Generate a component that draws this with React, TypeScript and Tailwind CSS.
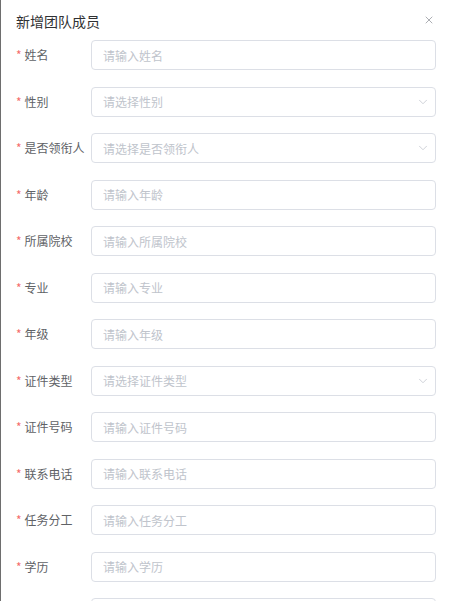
import { ChevronDown, X } from "lucide-react";

type Field = {
  label: string;
  placeholder: string;
  select?: boolean;
};

const fields: Field[] = [
  { label: "姓名", placeholder: "请输入姓名" },
  { label: "性别", placeholder: "请选择性别", select: true },
  { label: "是否领衔人", placeholder: "请选择是否领衔人", select: true },
  { label: "年龄", placeholder: "请输入年龄" },
  { label: "所属院校", placeholder: "请输入所属院校" },
  { label: "专业", placeholder: "请输入专业" },
  { label: "年级", placeholder: "请输入年级" },
  { label: "证件类型", placeholder: "请选择证件类型", select: true },
  { label: "证件号码", placeholder: "请输入证件号码" },
  { label: "联系电话", placeholder: "请输入联系电话" },
  { label: "任务分工", placeholder: "请输入任务分工" },
  { label: "学历", placeholder: "请输入学历" },
  // next row is only peeking in at the bottom edge
  { label: "", placeholder: "" },
];

const FormRow = ({ field }: { field: Field }) => (
  <div className="flex items-center h-[30px] shrink-0">
    <label className="w-[75px] shrink-0 flex items-center text-[12px] text-[#606266]">
      {field.label && <span className="text-[#f56c6c] mr-[3px]">*</span>}
      {field.label}
    </label>
    <div className="relative flex-1 h-[30px]">
      <input
        readOnly={field.select}
        placeholder={field.placeholder}
        className="w-full h-full border border-[#dcdfe6] rounded-[4px] px-[11px] text-[12px] text-[#606266] placeholder:text-[#c0c4cc] outline-none bg-white"
      />
      {field.select && (
        <ChevronDown
          size={14}
          strokeWidth={1.3}
          className="absolute right-[6px] top-[8px] text-[#c0c4cc]"
        />
      )}
    </div>
  </div>
);

export default function App() {
  return (
    <div
      className="w-[449px] h-[601px] overflow-hidden bg-white flex"
      style={{ fontFamily: '"Noto Sans CJK SC", "Noto Sans", sans-serif' }}
    >
      <div className="w-px shrink-0 bg-[#6e6e6e]" />
      <div className="flex-1 flex flex-col pl-[15px] pr-[13px]">
        <div className="flex items-start justify-between h-[40px] shrink-0 pt-[11px]">
          <span className="text-[14px] leading-[20px] text-[#303133]">新增团队成员</span>
          <X size={12} strokeWidth={1.5} className="text-[#909399] mr-px mt-[3px]" />
        </div>
        <div className="flex flex-col gap-[16.5px] shrink-0">
          {fields.map((f, i) => (
            <FormRow key={i} field={f} />
          ))}
        </div>
      </div>
    </div>
  );
}
